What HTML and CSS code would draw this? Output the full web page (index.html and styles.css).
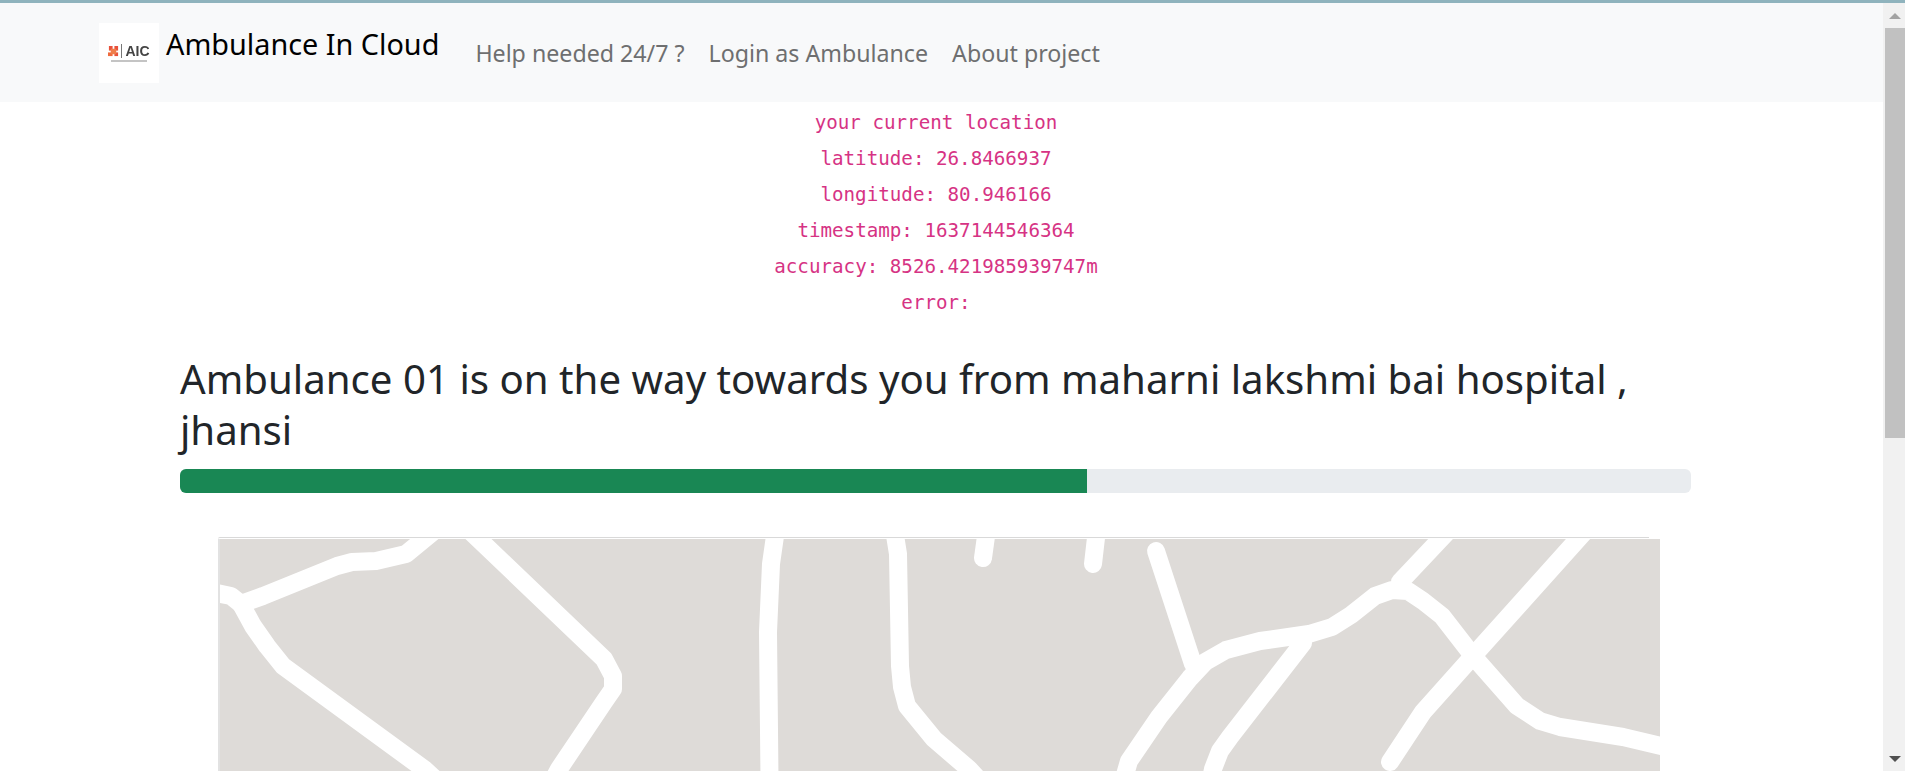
FILE: index.html
```html
<!DOCTYPE html>
<html lang="en">
<head>
    <meta charset="UTF-8">
    <meta name="viewport" content="width=device-width, initial-scale=1.0">
    <title>Ambulance In Cloud</title>
    <link rel="stylesheet" href="styles.css">
</head>
<body>
    <div class="page">
        <nav class="navbar">
            <a class="brand" href="#">
                <span class="logo">
                    <span class="logo-row">
                        <svg class="logo-mark" viewBox="0 0 12 12" width="11" height="11">
                            <rect x="1" y="0" width="4" height="5" fill="#e8503a"/>
                            <rect x="7" y="0" width="4" height="5" fill="#e8503a"/>
                            <rect x="0" y="7" width="5" height="4" fill="#ef6a3c"/>
                            <rect x="7" y="7" width="4" height="4" fill="#e8503a"/>
                            <rect x="3" y="3" width="6" height="6" fill="#ef7d4a"/>
                        </svg>
                        <span class="logo-sep"></span>
                        <span class="logo-text">AIC</span>
                    </span>
                    <span class="logo-sub"></span>
                </span>
                <span class="brand-name">Ambulance In Cloud</span>
            </a>
            <ul class="nav-links">
                <li><a href="#">Help needed 24/7 ?</a></li>
                <li><a href="#">Login as Ambulance</a></li>
                <li><a href="#">About project</a></li>
            </ul>
        </nav>

        <div class="location">
            <code>your current location</code>
            <code>latitude: 26.8466937</code>
            <code>longitude: 80.946166</code>
            <code>timestamp: 1637144546364</code>
            <code>accuracy: 8526.421985939747m</code>
            <code>error:</code>
        </div>

        <div class="status">
            <h2>Ambulance 01 is on the way towards you from maharni lakshmi bai hospital , jhansi</h2>
            <div class="progress"><div class="progress-bar" style="width: 60%"></div></div>
        </div>

        <div class="map-edge"></div>
        <div class="map">
            <svg viewBox="220 540 1440 300" width="1440" height="300">
                <g class="roads">
                    <polyline points="434,532 406,555 376,562 352,563 337,567 263,597 241,605 231,597 212,593"/>
                    <polyline points="241,605 253,627 267,647 283,667 424,770 470,812"/>
                    <polyline points="468,530 604,660 613,677 613,690 604,703 559,770 535,815"/>
                    <polyline points="776,530 771,565 768,633 770,830"/>
                    <polyline points="894,530 898,555 900,667 902,688 907,707 934,740 969,770 1010,815"/>
                    <polyline points="987,530 983,559"/>
                    <polyline points="1097,530 1093,565"/>
                    <polyline points="1156,552 1193,665"/>
                    <polyline points="1118,800 1129,762 1159,718 1190,679 1205,663 1226,651 1260,642 1309,635 1332,628 1351,616 1375,597 1392,591 1408,592 1423,602 1442,617 1473,657 1517,707 1540,722 1560,728 1623,738 1670,749"/>
                    <polyline points="1303,644 1230,738 1220,752 1213,770 1205,810"/>
                    <polyline points="1450,530 1400,583"/>
                    <polyline points="1587,530 1473,657 1423,713 1390,763"/>
                </g>
            </svg>
        </div>
    </div>

    <div class="scrollbar">
        <span class="arrow arrow-up"></span>
        <div class="thumb"></div>
        <span class="arrow arrow-down"></span>
    </div>
</body>
</html>
```

FILE: styles.css
```css
/* General */
html, body {
    height: 100%;
}

body {
    margin: 0;
    height: 771px;
    overflow: hidden;
    display: flex;
    background-color: #fff;
    color: #212529;
    font-family: "Noto Sans", sans-serif;
    border-top: 3px solid #8fb3bd;
    box-sizing: border-box;
}

a {
    text-decoration: none;
}

.page {
    flex: 1;
    min-width: 0;
}

/* Navbar */
.navbar {
    display: flex;
    align-items: flex-start;
    height: 99px;
    padding: 20px 0 0 99px;
    box-sizing: border-box;
    background-color: #f8f9fa;
}

.brand {
    display: flex;
    align-items: flex-start;
    color: #000;
}

.logo {
    display: flex;
    flex-direction: column;
    align-items: center;
    justify-content: center;
    gap: 2px;
    width: 60px;
    height: 60px;
    background-color: #fff;
}

.logo-row {
    display: flex;
    align-items: center;
    gap: 2px;
    filter: blur(0.4px);
}

.logo-sep {
    width: 1px;
    height: 14px;
    margin-right: 1px;
    background-color: #777;
}

.logo-text {
    font-family: "Liberation Sans", sans-serif;
    font-size: 14px;
    line-height: 14px;
    font-weight: 700;
    color: #444;
}

.logo-sub {
    width: 36px;
    height: 2px;
    background-color: #c4c4c4;
}

.brand-name {
    margin-left: 7px;
    font-size: 28.8px;
    line-height: 42px;
}

.nav-links {
    display: flex;
    gap: 24px;
    list-style: none;
    margin: 13px 0 0 36px;
    padding: 0;
    font-size: 23.2px;
    line-height: 34px;
}

.nav-links a {
    color: #6e6f70;
}

/* Location text */
.location {
    margin-left: -11px;
    text-align: center;
    padding-top: 3px;
}

.location code {
    display: block;
    height: 36px;
    font-family: "DejaVu Sans Mono", monospace;
    font-size: 19.2px;
    line-height: 36px;
    color: #d63384;
}

/* Status heading and progress */
.status {
    padding: 32px 192px 0 180px;
}

.status h2 {
    margin: 0;
    font-size: 40.2px;
    font-weight: 400;
    line-height: 51px;
}

.progress {
    height: 24px;
    margin-top: 14px;
    overflow: hidden;
    background-color: #e9ecef;
    border-radius: 6px;
}

.progress-bar {
    height: 100%;
    background-color: #198754;
}

/* Map */
.map-edge {
    width: 1431px;
    height: 1px;
    margin: 44px 0 0 218px;
    border-top: 1px solid #d9d9d9;
    border-top-left-radius: 3px;
}

.map {
    width: 1440px;
    margin-left: 218px;
    border-left: 2px solid #e2e2e2;
    background-color: #dedbd8;
}

.map svg {
    display: block;
}

.roads polyline {
    fill: none;
    stroke: #fff;
    stroke-width: 18;
    stroke-linecap: round;
    stroke-linejoin: round;
}

/* Scrollbar */
.scrollbar {
    display: flex;
    flex-direction: column;
    align-items: center;
    flex: none;
    width: 22px;
    height: 768px;
    padding-left: 2px;
    box-sizing: border-box;
    background-color: #f1f1f1;
}

.thumb {
    width: 20px;
    height: 410px;
    margin-top: 9px;
    background-color: #c1c1c1;
}

.arrow {
    width: 0;
    height: 0;
    border-left: 6px solid transparent;
    border-right: 6px solid transparent;
}

.arrow-up {
    margin-top: 10px;
    border-bottom: 6px solid #a3a3a3;
}

.arrow-down {
    margin-top: auto;
    margin-bottom: 9px;
    border-top: 6px solid #505050;
}
```
